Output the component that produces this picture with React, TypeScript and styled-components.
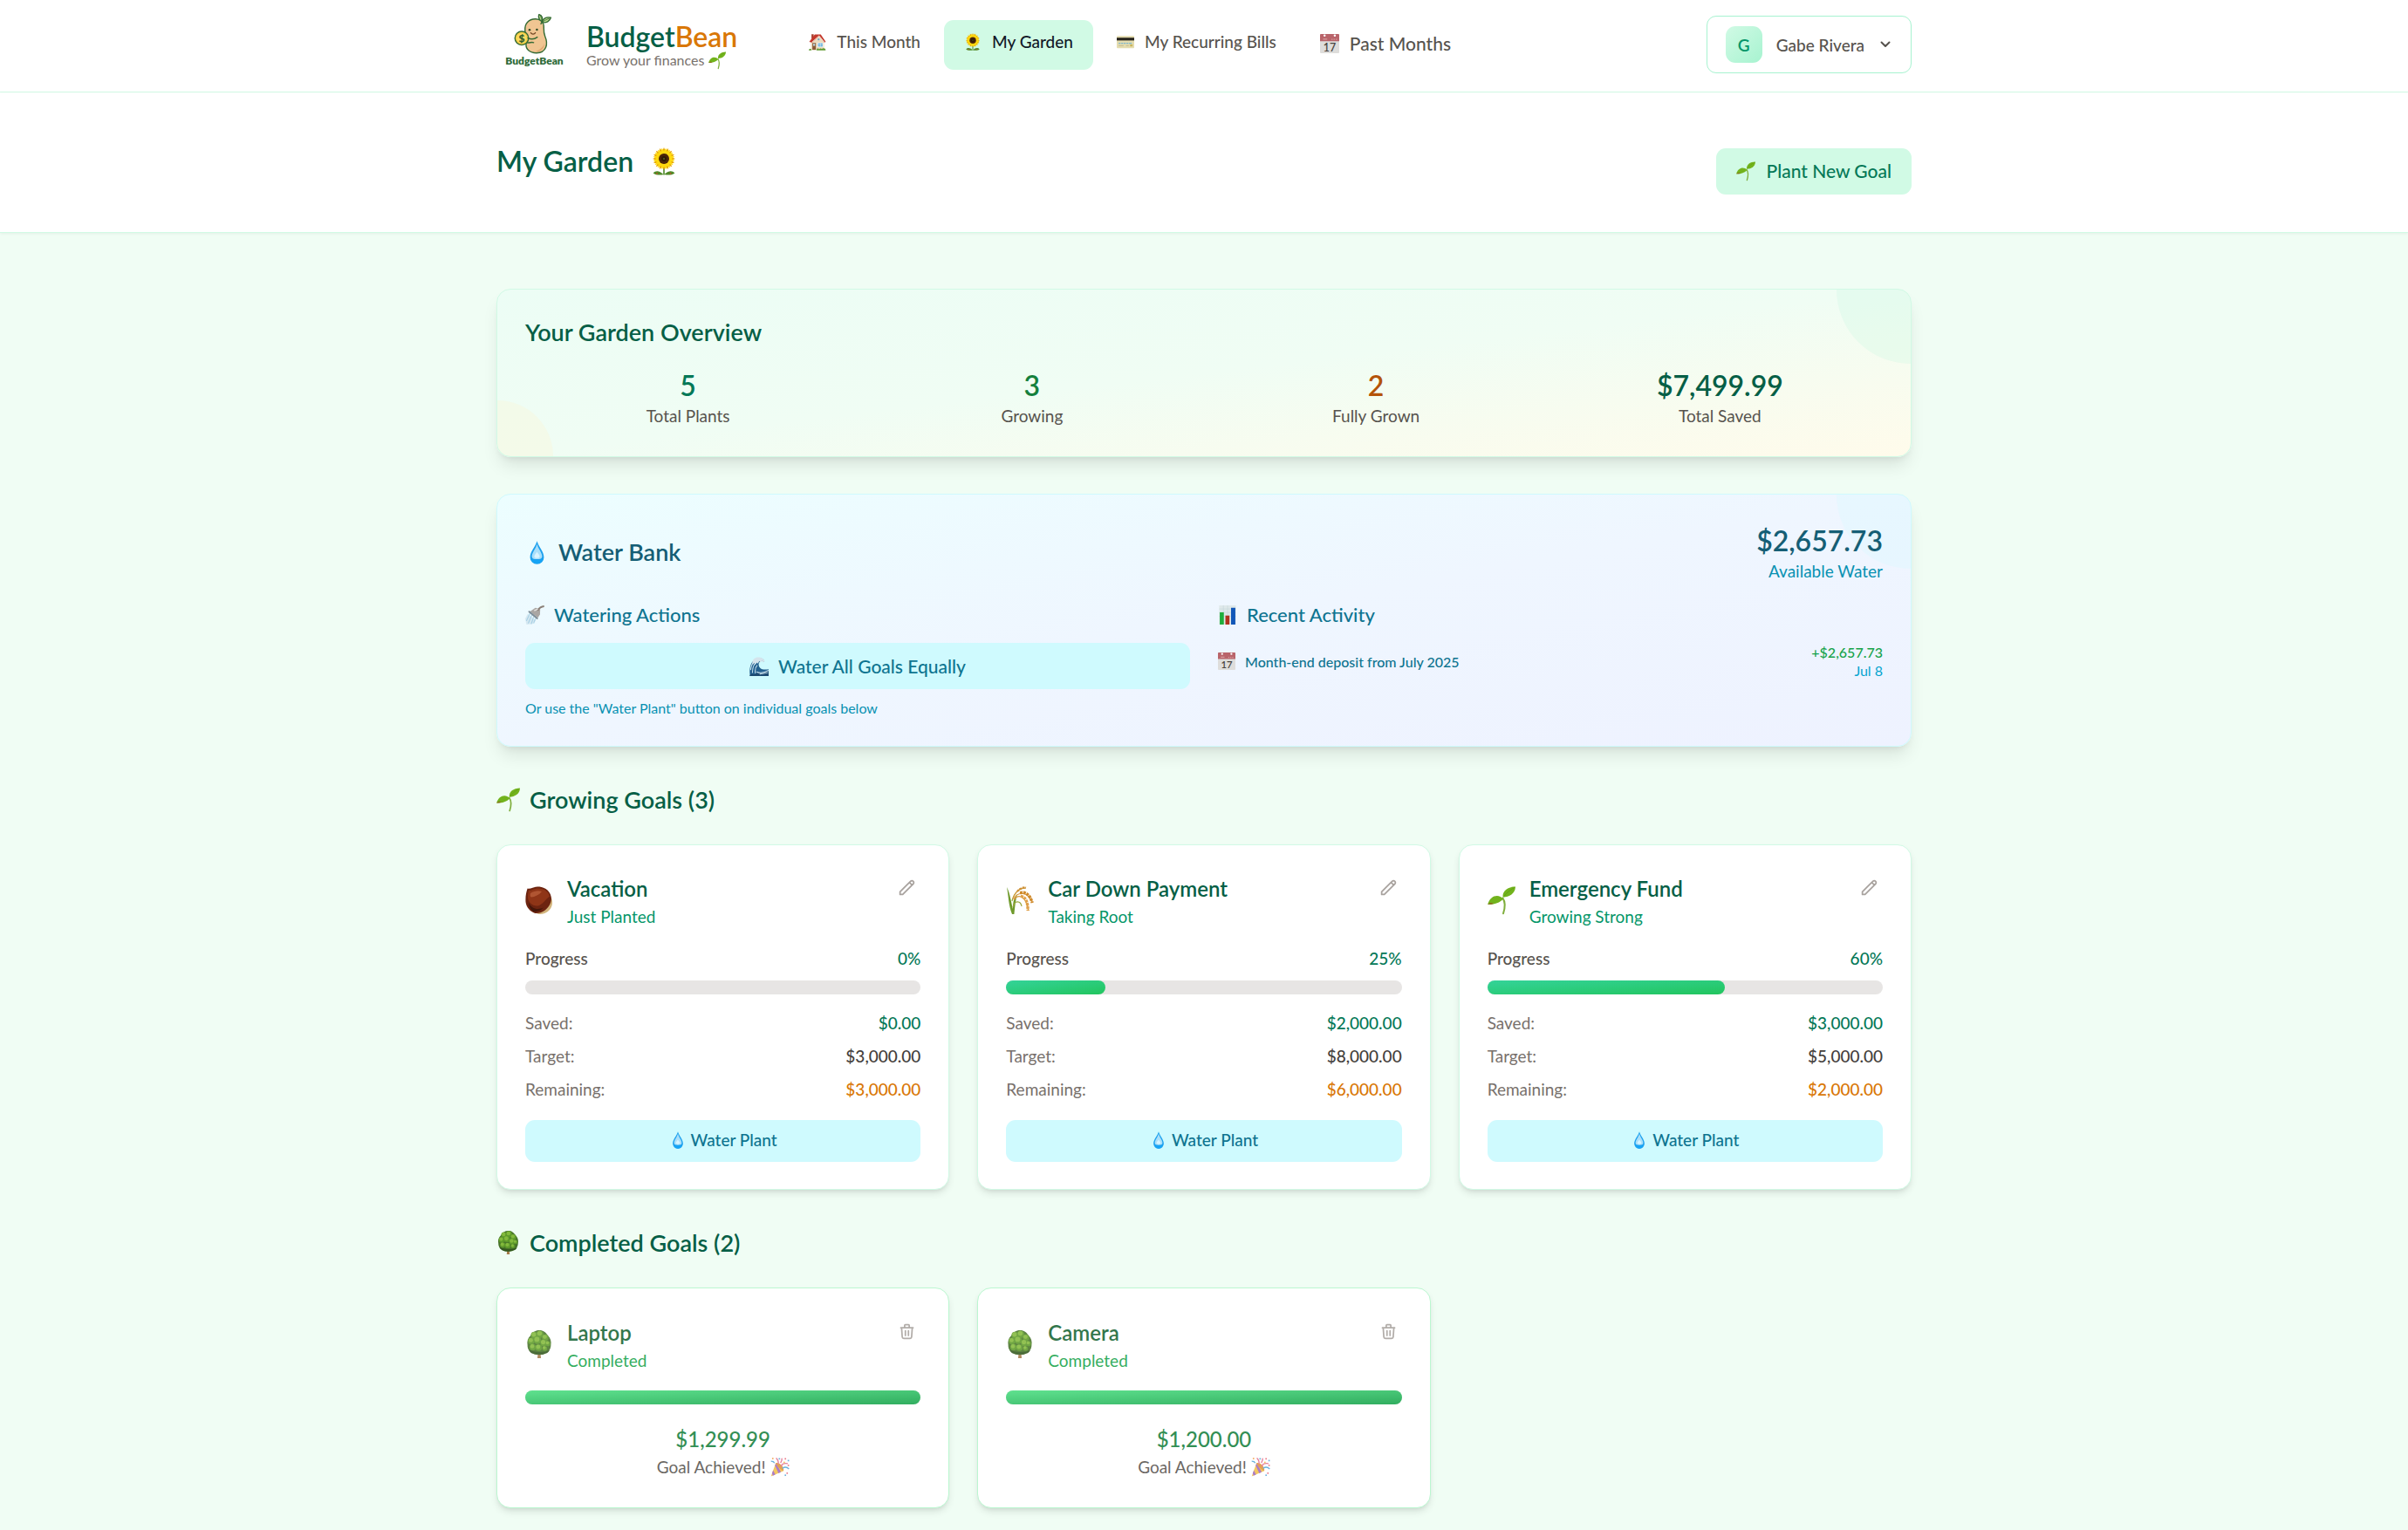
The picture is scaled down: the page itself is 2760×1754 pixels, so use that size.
import React from "react";
import styled, { createGlobalStyle, css } from "styled-components";

const GlobalStyle = createGlobalStyle`
  *, *::before, *::after { box-sizing: border-box; }
  body {
    margin: 0;
    background: #f0fdf4;
    color: #57534e;
    font-family: Lato, "Open Sans", sans-serif;
    font-size: 19px;
    line-height: 27px;
  }
  h1, h2, h3, h4, p, dl, dd, ul { margin: 0; padding: 0; }
  button { border: 0; font: inherit; cursor: pointer; }
`;

/* ---------- drawings ---------- */

const Icon = styled.svg<{ $size: number }>`
  display: block;
  flex: none;
  width: ${(p) => p.$size}px;
  height: ${(p) => p.$size}px;
  overflow: visible;
`;

const ring = (n: number, offset = 0) =>
  Array.from({ length: n }, (_, i) => offset + (i * 360) / n);

const art = {
  seedling: (
    <>
      <path d="M17.4 13.6C20.6 18 20 25 18 31.3" fill="none" stroke="#7fae3c" strokeWidth="2" strokeLinecap="round" />
      <path d="M17.6 12.8C16.6 5.6 23 .6 32 .6 31.6 9 25 12 17.6 12.8z" fill="#72b31c" />
      <path d="M18 14.4C13 8.4 3 10 .2 20.8 7.6 21 14.2 19 18 14.4z" fill="#72b31c" />
      <path d="M.2 20.8C2.6 18.4 5 18.6 7 19.9 4.6 20.7 2.4 21 .2 20.8z" fill="#8a6a1c" />
      <path d="M19 11.4C22 7 26 4.4 31 1.4" fill="none" stroke="#5c9a12" strokeWidth=".7" />
    </>
  ),
  sunflower: (
    <>
      <path d="M16 24v7.6" stroke="#4e8a2a" strokeWidth="1.6" />
      <path d="M15.6 31C11 26.4 6.6 26 3.6 29.4 7 32 12 32 15.6 31zM16.4 31C21 26.4 25.4 26 28.4 29.4 25 32 20 32 16.4 31z" fill="#4f8a27" />
      <circle cx="8" cy="29.8" r=".9" fill="#c8502a" />
      <circle cx="23.6" cy="29.8" r=".9" fill="#c8502a" />
      <circle cx="16" cy="13" r="9.4" fill="#f2bd08" />
      {ring(16).map((a) => (
        <path key={a} d="M16 0L18.6 6 16 12 13.4 6z" fill="#e8a806" transform={`rotate(${a} 16 13)`} />
      ))}
      {ring(16, 11).map((a) => (
        <path key={a} d="M16 .4L18.6 6.2 16 12 13.4 6.2z" fill="#ffd90f" transform={`rotate(${a} 16 13)`} />
      ))}
      <circle cx="16" cy="13" r="6" fill="#4a2508" />
      <circle cx="16" cy="13" r="3" fill="#2f1a06" />
      <circle cx="16" cy="13" r="1" fill="#5c6a1a" />
    </>
  ),
  house: (
    <>
      <rect x="5" y="2" width="4" height="8" fill="#a8402f" />
      <path d="M4 15L16.6 5 28 15v15.6H4z" fill="#ecdcc0" />
      <path d="M.8 15.8L11 2.4h11L31.2 15.8 28.6 17 18.8 5.6 6 17z" fill="#c4382c" />
      <path d="M6 16.6L18.8 4.8 28.4 16.6" fill="none" stroke="#f4eadb" strokeWidth="1.5" />
      <circle cx="18" cy="11.4" r="1.8" fill="#6aa9c9" />
      <rect x="6.6" y="18" width="6.4" height="12.6" fill="#8b5a36" />
      <rect x="8" y="19.4" width="3.6" height="4" fill="#b7cfd6" />
      <rect x="16" y="17.6" width="10.4" height="8" fill="#fff" />
      <rect x="17" y="18.6" width="8.4" height="6" fill="#58a8d8" />
      <path d="M21.2 18.6v6M17 21.6h8.4" stroke="#fff" strokeWidth=".8" />
      <path d="M0 31.4c0-3.6 4.6-3.6 5-.6v.6zM14 31.4c.4-4 4-4 5-2 1.4-2 4-2 5-.2 2-2.8 7-1.6 7 2.2z" fill="#5f9a32" />
    </>
  ),
  card: (
    <>
      <rect x="0" y="5" width="32" height="22.4" rx="1.6" fill="#e4dcae" />
      <rect x="0" y="8.4" width="32" height="5" fill="#26231c" />
      <path d="M3.4 18.4h3.6m1.2 0h3.6m1.2 0h3.6m1.2 0h3.6m1.2 0h5" stroke="#7db6cf" strokeWidth="2" />
      <path d="M3.4 23h9M17 23h5" stroke="#b9b08a" strokeWidth="1.2" />
      <rect x="24.4" y="20.8" width="4.6" height="3.6" fill="#c8b45c" />
    </>
  ),
  calendar: (
    <>
      <rect x="0" y="0" width="32" height="32" rx="1.6" fill="#dedddb" />
      <path d="M1.6 0h28.8A1.6 1.6 0 0132 1.6V12H0V1.6A1.6 1.6 0 011.6 0z" fill="#b9646a" />
      <circle cx="7.6" cy="2.6" r="1.8" fill="#fff" />
      <circle cx="24.6" cy="2.6" r="1.8" fill="#fff" />
      <path d="M5 8.6h7M19 9h2m1.6 0h2m1.6 0h2" stroke="#d59a9c" strokeWidth="1.8" />
      <text x="16" y="28.6" textAnchor="middle" fontSize="18" fontWeight="600" fill="#4a4642">17</text>
    </>
  ),
  drop: (
    <>
      <path d="M16 .4C18 8 25.4 14.6 25.4 22.4a9.4 9.4 0 01-18.8 0C6.6 14.6 14 8 16 .4z" fill="#1da0ee" />
      <path d="M16 4C17.6 11 23 16 23 21c0 3-2.6 4-7 4s-7-1-7-4c0-5 5.4-10 7-17z" fill="#a9dffa" />
      <path d="M16 15c2 3 4 4 3.6 6.6-.6 2.4-6.6 2.4-7.2 0C12 19 14 18 16 15z" fill="#d8f3ff" />
      <path d="M8 24.6c2 2 14 2 16 0-1 4.4-4.4 6.2-8 6.2s-7-1.8-8-6.2z" fill="#16a4f5" />
    </>
  ),
  shower: (
    <>
      <path d="M4 14L18 25 12 31 2 32 0 22z" fill="#cfe3ee" opacity=".8" />
      <path d="M8 13L2 26M11 16L5 30M14 19L10 31M17 22L14 30" stroke="#9ccbe3" strokeWidth="1.7" opacity=".8" />
      <path d="M8 10L21 20.6 24.6 15.4 25 6 17 4z" fill="#aaa6a3" />
      <path d="M6.6 10.4L20 21.8" stroke="#7d8c96" strokeWidth="2.8" strokeLinecap="round" />
      <path d="M20.6 8.6C23 4.6 25 1.8 31.6 1.4" fill="none" stroke="#8b8078" strokeWidth="3" />
      <path d="M15 9L21 6" stroke="#e4e2e0" strokeWidth="2" />
    </>
  ),
  wave: (
    <>
      <path d="M1 31C-1 20 2 8 10 4c7-3.6 14-1 15 4-5-2.6-9-1-9.6 4C15 18 20 23 32 20.6V31z" fill="#23608f" />
      <path d="M2 22C3 13 6 8 11 6M5 27C5 18 7 12 12 9M10 28C9 22 10 17 13 14" fill="none" stroke="#c4dfec" strokeWidth="1.6" />
      <path d="M5 9C5 4 10 .4 15 .8c4 .2 9 2 10.4 6.2l-3 2.4-1.4-3-2.6 3-2-2.6-2.2 4.6-2.4-2-2 4-1.6-3.4-3.2 3z" fill="#d5e4ec" />
      <path d="M0 32C2 27 5 28 8 29.4c4-3 7-3 10-.6 4-3 9-3 14-5V32z" fill="#1c4a72" />
      <path d="M12 25c5 2.6 12 2 20-2.4M17 29c4-1 9-1 14-3" stroke="#c9e0ec" strokeWidth="1.5" fill="none" />
    </>
  ),
  chart: (
    <>
      <rect x="2" y="0" width="28" height="32" fill="#dfe9ea" />
      <path d="M2 6h28M2 12h28M2 18h28M9 0v32M16 0v32" stroke="#c4d6da" strokeWidth=".8" />
      <rect x="3" y="11.6" width="6.8" height="20.4" fill="#1fae3c" />
      <rect x="12.4" y="17" width="6.8" height="15" fill="#b0321f" />
      <rect x="21.8" y="4" width="7.2" height="28" fill="#1257b8" />
    </>
  ),
  chestnut: (
    <>
      <path d="M10 28C4 22 8 8 20 5c8 2 11.6 9 11 15-1 8-8 12-14 12-3 0-5.4-1.6-7-4z" fill="#d2b47c" />
      <path d="M2.6 2.6C6 3.6 9 .6 14 .4 24 .2 30 7 30 14.6 29.6 20 26.6 25 22 28c-4 2.6-9 3.6-12 2.4C4 27.6 .2 22 .4 15.4 .4 10 1.4 6 2.6 2.6z" fill="#6d2410" />
      <path d="M4 4.6C8 5 10 2.4 15 2.4c7 0 12 4 13 9-5 3.6-8 10-14 11C8 22.6 3 18 3 12.4c0-3 .4-5.4 1-7.8z" fill="#8f3517" />
      <path d="M6 8c4-2.6 9-3.6 13-2-3 4-8 6-12 6.6C5.4 12 5.4 10 6 8z" fill="#b65a37" opacity=".85" />
      <path d="M4 19c3 6 9 9 17 5.6-3 3.6-8 5-11.6 4.4C6.4 27 4 23 4 19z" fill="#45170a" />
    </>
  ),
  rice: (
    <>
      <path d="M7 32C3 22 3 12 1 1c4 8 5 18 7 25 0-8 1-13 5-17-2 7-2.6 14-3.6 23z" fill="#6f9a2c" />
      <path d="M8 24C10 15 17 17 18 23M7 17C9 8 14 3 22 2" fill="none" stroke="#9aa63c" strokeWidth="1.2" />
      <path d="M8 14C12 4 17 2 23 2M9 15C13 6 24 5 30 18M9 16C14 8 23 11 25.6 27" fill="none" stroke="#d79a3f" strokeWidth="1.2" />
      <path d="M13 6c3-4 7-5 10-4.4" stroke="#cf8f36" strokeWidth="2.2" strokeDasharray="2.6 1" fill="none" />
      <path d="M16 7.6C23 6 27.6 10 30.2 19" stroke="#d08a2c" strokeWidth="3.4" strokeDasharray="3 .8" fill="none" />
      <path d="M17 11.4C22.6 12 25 18 25.2 28" stroke="#e0a04a" strokeWidth="3.4" strokeDasharray="3 .8" fill="none" />
    </>
  ),
  tree: (
    <>
      <path d="M14.6 25h2.8l.6 7h-4z" fill="#a57b49" />
      <path d="M16 0c5 0 7.6 2.4 9.8 6C29 8.6 30.2 13 29.4 17c0 4.4-2.4 7.6-5.6 9-2 2.2-5.8 2.4-7.8 1.6-2.4.8-6 .4-7.8-1.6C4.8 24.6 2.4 21.4 2.6 17 1.8 13 3 8.6 6.2 6 8.4 2.4 11.4 0 16 0z" fill="#48742a" />
      {[[10.4, 5.8, 4], [17, 4.6, 4.2], [23, 8.6, 3.8], [7, 12.4, 3.8], [14, 11.4, 4.4], [21.2, 14.6, 4], [8.6, 19.4, 3.6], [26, 15.4, 2.8], [15.4, 20, 3.8], [22.4, 21, 2.8]].map(
        ([x, y, r], i) => (
          <g key={i}>
            <circle cx={x} cy={y} r={r} fill="#5e9a2b" />
            <circle cx={x - 0.6} cy={y - 1} r={r * 0.65} fill="#83b93c" />
          </g>
        )
      )}
      <path d="M4 22c5 3.6 19 4 24 .4-1.4 3.2-3.2 3.8-5.4 4.4-4 1.6-9.2 1.6-13.2.2C7 26.4 5 25 4 22z" fill="#34581f" />
    </>
  ),
  party: (
    <>
      <path d="M9 9L1 31.4 22 22C21 15 15 9 9 9z" fill="#f3c04a" />
      <path d="M7.6 13L13.6 26 17.6 24 9.6 9.4zM4.6 21l3.6 7.4L4 30.2 2.8 26z" fill="#a06cc0" />
      <path d="M9 9c6-1.4 14 6 13 13-4-1-12-8-13-13z" fill="#e0953a" />
      <path d="M13 11C14 6 12 3 9.6.8M18 15c1-5 5-6 11-5M17 9c2-3 3-5 2-8" fill="none" stroke="#e2708f" strokeWidth="2" />
      <path d="M20 18c4-3 8-2 11 1M1 6c3 0 5 1 6 3" fill="none" stroke="#59a8d8" strokeWidth="2" />
      {[["#e86a7a", 25, 2], ["#59a8d8", 30, 5], ["#f3c04a", 23, 8], ["#e86a7a", 28, 26], ["#59a8d8", 25, 29.4], ["#f3a04a", 4, 1.6], ["#e86a7a", 30, 13], ["#59a8d8", 15, 2]].map(([c, x, y], i) => (
        <rect key={i} x={Number(x) - 1.2} y={Number(y) - 1.2} width="2.4" height="2.4" fill={String(c)} />
      ))}
    </>
  ),
};

type ArtName = keyof typeof art;

const Emoji = ({ name, size }: { name: ArtName; size: number }) => (
  <Icon $size={size} viewBox="0 0 32 32" aria-hidden="true">
    {art[name]}
  </Icon>
);

const LogoSvg = styled.svg`
  display: block;
  flex: none;
  width: 87px;
  height: 72px;
`;

const Logo = () => (
  <LogoSvg viewBox="0 0 87 72" role="img" aria-label="BudgetBean logo">
    <g stroke="#356b35" strokeWidth="1.4" strokeLinejoin="round" strokeLinecap="round">
      <path d="M52 9.4C48.6 6.6 48 3 48.8.6 52.4 1.6 53.6 5 52 9.4z" fill="#bcd98c" />
      <path d="M52.4 9.6C53.4 5 57.6 3 62.4 4.2 61.4 8.4 57 10.6 52.4 9.6z" fill="#bcd98c" />
      <path d="M50.4 1.8C51.4 4 51.8 6.6 52.2 9.4 55 7.6 57.6 6 60.6 5" fill="none" strokeWidth=".8" />
      <path
        d="M44.5 5.7C50 5.5 54.5 9.5 54.3 15 54.2 20 54 22 55.8 26 59.4 34 57.6 44.5 46 44.7 38 44.8 33.5 40 34 35 34.5 28 33.2 26 32.8 19 32 11 37 6 44.5 5.7z"
        fill="#f0c592"
      />
      <path d="M52 9.4L51 11.4" fill="none" />
    </g>
    <path d="M55 34C55 40 50 43.6 44 43.4 50 41 53.6 38 55 34z" fill="#e0a870" />
    <circle cx="38" cy="18.2" r="1.3" fill="#2f4a26" />
    <circle cx="46.4" cy="18" r="1.3" fill="#2f4a26" />
    <path d="M39.4 21.6c1.2 2 4 2 5.2 0" fill="none" stroke="#6b3f1e" strokeWidth="1.2" strokeLinecap="round" />
    <circle cx="29" cy="27.8" r="7.8" fill="#f7cf46" stroke="#356b35" strokeWidth="1.4" />
    <circle cx="29" cy="27.8" r="5.6" fill="#fbdc62" />
    <text x="29" y="32" textAnchor="middle" fontSize="12" fontWeight="800" fill="#35602f">$</text>
    <path d="M36 27.6c4 1.8 7.6 1.4 10.8-1M35.6 33c3 .2 4.6-1 7-.2" fill="none" stroke="#356b35" strokeWidth="1.4" strokeLinecap="round" />
    <text x="43.5" y="58" textAnchor="middle" fontSize="12" fontWeight="800" fill="#2f6b3a">BudgetBean</text>
  </LogoSvg>
);

const StrokeIcon = styled.svg<{ $size: number }>`
  display: block;
  flex: none;
  width: ${(p) => p.$size}px;
  height: ${(p) => p.$size}px;
  fill: none;
  stroke: currentColor;
  stroke-linecap: round;
  stroke-linejoin: round;
  stroke-width: 2;
`;

/* ---------- page frame ---------- */

const Container = styled.div`
  width: 100%;
  max-width: 1686px;
  margin: 0 auto;
  padding: 0 32px;
`;

const TopBar = styled.header`
  background: #fff;
  border-bottom: 1px solid #d1fae5;
`;

const TopBarRow = styled(Container)`
  display: flex;
  align-items: flex-start;
  min-height: 105px;
  flex-wrap: wrap;
`;

const Brand = styled.a`
  display: flex;
  align-items: center;
  gap: 16px;
  padding-top: 16px;
  color: inherit;
  text-decoration: none;
`;

const BrandName = styled.span`
  display: block;
  color: #065f46;
  font-size: 32px;
  font-weight: 600;
  line-height: 33px;
`;

const BrandAccent = styled.span`
  color: #d97706;
`;

const Tagline = styled.span`
  display: flex;
  align-items: center;
  gap: 5px;
  color: #78716c;
  font-size: 16px;
  line-height: 21px;
`;

const Nav = styled.nav`
  display: flex;
  flex-wrap: wrap;
  align-items: flex-start;
  gap: 4px;
  margin-left: 59px;
  padding-top: 23px;
`;

const NavLink = styled.a<{ $active?: boolean; $large?: boolean }>`
  display: flex;
  align-items: center;
  gap: 12px;
  padding: 11px 23px 19px;
  border-radius: 11px;
  background: ${(p) => (p.$active ? "#d1fae5" : "transparent")};
  color: ${(p) => (p.$active ? "#111827" : "#57534e")};
  font-size: ${(p) => (p.$large ? 21 : 19)}px;
  line-height: ${(p) => (p.$large ? 32 : 27)}px;
  font-weight: 500;
  text-decoration: none;
`;

const UserArea = styled.div`
  margin-left: auto;
  padding-top: 18px;
`;

const UserButton = styled.button`
  display: flex;
  align-items: center;
  gap: 16px;
  padding: 11px 21px;
  border: 1px solid #a7f3d0;
  border-radius: 11px;
  background: #fff;
  color: #57534e;
  font-weight: 500;
`;

const Avatar = styled.span`
  display: grid;
  place-items: center;
  width: 42px;
  height: 42px;
  border-radius: 11px;
  background: linear-gradient(to bottom right, #d1fae5, #a7f3d0);
  color: #059669;
  font-weight: 600;
`;

const PageHeader = styled.div`
  position: relative;
  padding: 57px 0 43px;
  background: #fff;
  border-bottom: 1px solid #d1fae5;
  box-shadow: 0 1px 3px rgba(0, 0, 0, 0.06);
`;

const PageHeaderRow = styled(Container)`
  display: flex;
  align-items: flex-start;
  justify-content: space-between;
  min-height: 60px;
`;

const PageTitle = styled.h1`
  display: flex;
  align-items: center;
  gap: 19px;
  color: #065f46;
  font-size: 32px;
  font-weight: 600;
  line-height: 43px;
`;

const softButton = css`
  display: flex;
  align-items: center;
  justify-content: center;
  border-radius: 11px;
  font-weight: 500;
`;

const PlantButton = styled.button`
  ${softButton}
  align-self: flex-end;
  gap: 12px;
  padding: 10px 23px 11px;
  background: #d1fae5;
  color: #047857;
  font-size: 21px;
  line-height: 32px;
`;

const Main = styled(Container)`
  display: flex;
  flex-direction: column;
  gap: 42px;
  padding-top: 64px;
  padding-bottom: 24px;
`;

/* ---------- feature panels ---------- */

const Panel = styled.section<{ $tone: "garden" | "water" }>`
  position: relative;
  overflow: hidden;
  padding: 31px 32px 33px;
  border: 1px solid ${(p) => (p.$tone === "garden" ? "#d1fae5" : "#cffafe")};
  border-radius: 16px;
  background: ${(p) =>
    p.$tone === "garden"
      ? "linear-gradient(to bottom right, #ecfdf5, #f0fdf4, #fffbeb)"
      : "linear-gradient(to bottom right, #ecfeff, #eff6ff, #eef2ff)"};
  box-shadow: 0 13px 20px -4px rgba(0, 0, 0, 0.1), 0 5px 8px -5px rgba(0, 0, 0, 0.1);
`;

const Bubble = styled.span<{ $corner: "top" | "bottom"; $color: string }>`
  position: absolute;
  border-radius: 50%;
  opacity: 0.25;
  background: ${(p) => p.$color};
  ${(p) =>
    p.$corner === "top"
      ? "width: 170px; height: 170px; top: -85px; right: -85px;"
      : "width: 128px; height: 128px; bottom: -64px; left: -64px;"}
`;

const PanelBody = styled.div`
  position: relative;
`;

const PanelTitle = styled.h2<{ $color: string }>`
  display: flex;
  align-items: center;
  gap: 11px;
  color: ${(p) => p.$color};
  font-size: 27px;
  font-weight: 600;
  line-height: 36px;
`;

const Stats = styled.dl`
  display: grid;
  grid-template-columns: repeat(auto-fit, minmax(200px, 1fr));
  gap: 21px;
  padding-top: 21px;
  text-align: center;
`;

const Stat = styled.div`
  display: flex;
  flex-direction: column-reverse;
`;

const StatLabel = styled.dt`
  color: #57534e;
`;

const BigNumber = styled.dd<{ $color: string }>`
  color: ${(p) => p.$color};
  font-size: 32px;
  font-weight: 600;
  line-height: 43px;
`;

const WaterHead = styled.div`
  display: flex;
  align-items: center;
  justify-content: space-between;
  margin-bottom: 21px;
`;

const WaterBalance = styled.dl`
  display: flex;
  flex-direction: column-reverse;
  text-align: right;
`;

const WaterLabel = styled.dt`
  color: #0891b2;
`;

const WaterColumns = styled.div`
  display: grid;
  grid-template-columns: repeat(auto-fit, minmax(420px, 1fr));
  gap: 32px;
`;

const SubTitle = styled.h3`
  display: flex;
  align-items: center;
  gap: 11px;
  margin-bottom: 16px;
  color: #0e7490;
  font-size: 22px;
  font-weight: 500;
  line-height: 32px;
`;

const WaterAllButton = styled.button`
  ${softButton}
  gap: 11px;
  width: 100%;
  padding: 11px 21px 10px;
  background: #cffafe;
  color: #0e7490;
  font-size: 21px;
  line-height: 32px;
`;

const Hint = styled.p`
  margin-top: 11px;
  color: #0891b2;
  font-size: 16px;
  line-height: 21px;
`;

const Activity = styled.div`
  display: flex;
  align-items: center;
  gap: 11px;
  color: #0e7490;
  font-size: 16px;
  font-weight: 500;
  line-height: 21px;
`;

const ActivitySum = styled.div`
  margin-left: auto;
  color: #16a34a;
  text-align: right;
`;

const ActivityDate = styled.time`
  display: block;
  color: #06a5d0;
  font-weight: 400;
`;

/* ---------- goals ---------- */

const GoalGroup = styled.section`
  display: grid;
  gap: 33px;
`;

const GroupTitle = styled.h2`
  display: flex;
  align-items: center;
  gap: 11px;
  color: #065f46;
  font-size: 27px;
  font-weight: 600;
  line-height: 37px;
`;

const GoalGrid = styled.div`
  display: grid;
  grid-template-columns: repeat(auto-fill, minmax(420px, 1fr));
  gap: 32px;
`;

const Card = styled.article<{ $done?: boolean }>`
  padding: ${(p) => (p.$done ? "32px 32px 33px" : "31px 32px")};
  border: 1px solid ${(p) => (p.$done ? "#bbf7d0" : "#d1fae5")};
  border-radius: 16px;
  background: #fff;
  box-shadow: 0 5px 8px -1px rgba(0, 0, 0, 0.1), 0 3px 5px -3px rgba(0, 0, 0, 0.1);
`;

const CardBody = styled.div<{ $done?: boolean }>`
  opacity: ${(p) => (p.$done ? 0.88 : 1)};
`;

const CardHead = styled.div`
  display: flex;
  align-items: center;
  gap: 16px;
  margin-bottom: 21px;
`;

const GoalName = styled.h3<{ $done?: boolean }>`
  color: ${(p) => (p.$done ? "#166534" : "#065f46")};
  font-size: 24px;
  font-weight: 600;
  line-height: 37px;
`;

const Stage = styled.p<{ $done?: boolean }>`
  color: ${(p) => (p.$done ? "#16a34a" : "#059669")};
`;

const IconButton = styled.button`
  align-self: flex-start;
  margin-left: auto;
  padding: 7px 5px;
  background: transparent;
  color: #a8a29e;
`;

const ProgressLine = styled.div`
  display: flex;
  justify-content: space-between;
  margin-bottom: 12px;
  font-weight: 500;
`;

const Percent = styled.span`
  color: #047857;
`;

const Track = styled.div`
  height: 16px;
  border-radius: 8px;
  background: #e7e5e4;
`;

const Fill = styled.div<{ $done?: boolean }>`
  height: 100%;
  border-radius: 8px;
  background: ${(p) =>
    p.$done
      ? "linear-gradient(to bottom right, #4ade80, #16a34a)"
      : "linear-gradient(to bottom right, #34d399, #22c55e)"};
`;

const Figures = styled.dl`
  display: grid;
  gap: 11px;
  padding: 19px 0 22px;
`;

const Figure = styled.div`
  display: flex;
  justify-content: space-between;
`;

const FigureLabel = styled.dt`
  color: #78716c;
`;

const FigureValue = styled.dd<{ $color: string }>`
  color: ${(p) => p.$color};
  font-weight: 500;
`;

const WaterButton = styled.button`
  ${softButton}
  gap: 5px;
  width: 100%;
  padding: 9px 16px 12px;
  background: #cffafe;
  color: #0e7490;
`;

const Achieved = styled.div`
  padding-top: 21px;
  text-align: center;
`;

const AchievedSum = styled.p`
  color: #15803d;
  font-size: 24px;
  font-weight: 500;
  line-height: 37px;
`;

const AchievedNote = styled.p`
  display: flex;
  align-items: center;
  justify-content: center;
  gap: 5px;
`;

/* ---------- data ---------- */

const money = (n: number) =>
  n.toLocaleString("en-US", { style: "currency", currency: "USD" });

const links: { label: string; icon: ArtName; active?: boolean; large?: boolean }[] = [
  { label: "This Month", icon: "house" },
  { label: "My Garden", icon: "sunflower", active: true },
  { label: "My Recurring Bills", icon: "card" },
  { label: "Past Months", icon: "calendar", large: true },
];

const growing: { name: string; stage: string; icon: ArtName; saved: number; target: number }[] = [
  { name: "Vacation", stage: "Just Planted", icon: "chestnut", saved: 0, target: 3000 },
  { name: "Car Down Payment", stage: "Taking Root", icon: "rice", saved: 2000, target: 8000 },
  { name: "Emergency Fund", stage: "Growing Strong", icon: "seedling", saved: 3000, target: 5000 },
];

const completed = [
  { name: "Laptop", saved: 1299.99 },
  { name: "Camera", saved: 1200 },
];

const stats = [
  { label: "Total Plants", value: "5", color: "#047857" },
  { label: "Growing", value: "3", color: "#15803d" },
  { label: "Fully Grown", value: "2", color: "#b45309" },
  { label: "Total Saved", value: money(7499.99), color: "#065f46" },
];

const GrowingCard = ({ name, stage, icon, saved, target }: (typeof growing)[number]) => {
  const percent = Math.round((saved / target) * 100);
  return (
    <Card>
      <CardHead>
        <Emoji name={icon} size={32} />
        <div>
          <GoalName>{name}</GoalName>
          <Stage>{stage}</Stage>
        </div>
        <IconButton aria-label={`Edit ${name}`}>
          <StrokeIcon $size={21} viewBox="0 0 24 24">
            <path d="M15.232 5.232l3.536 3.536m-2.036-5.036a2.5 2.5 0 113.536 3.536L6.5 21.036H3v-3.572L16.732 3.732z" />
          </StrokeIcon>
        </IconButton>
      </CardHead>
      <ProgressLine>
        <span>Progress</span>
        <Percent>{percent}%</Percent>
      </ProgressLine>
      <Track role="progressbar" aria-label={`${name} progress`} aria-valuenow={percent}>
        <Fill style={{ width: `${percent}%` }} />
      </Track>
      <Figures>
        <Figure>
          <FigureLabel>Saved:</FigureLabel>
          <FigureValue $color="#047857">{money(saved)}</FigureValue>
        </Figure>
        <Figure>
          <FigureLabel>Target:</FigureLabel>
          <FigureValue $color="#44403c">{money(target)}</FigureValue>
        </Figure>
        <Figure>
          <FigureLabel>Remaining:</FigureLabel>
          <FigureValue $color="#d97706">{money(target - saved)}</FigureValue>
        </Figure>
      </Figures>
      <WaterButton>
        <Emoji name="drop" size={20} />
        Water Plant
      </WaterButton>
    </Card>
  );
};

const CompletedCard = ({ name, saved }: (typeof completed)[number]) => (
  <Card $done>
    <CardBody $done>
      <CardHead>
        <Emoji name="tree" size={32} />
        <div>
          <GoalName $done>{name}</GoalName>
          <Stage $done>Completed</Stage>
        </div>
        <IconButton aria-label={`Delete ${name}`}>
          <StrokeIcon $size={21} viewBox="0 0 24 24">
            <path d="M19 7l-.867 12.142A2 2 0 0116.138 21H7.862a2 2 0 01-1.995-1.858L5 7m5 4v6m4-6v6m1-10V4a1 1 0 00-1-1h-4a1 1 0 00-1 1v3M4 7h16" />
          </StrokeIcon>
        </IconButton>
      </CardHead>
      <Track role="progressbar" aria-label={`${name} progress`} aria-valuenow={100}>
        <Fill $done />
      </Track>
      <Achieved>
        <AchievedSum>{money(saved)}</AchievedSum>
        <AchievedNote>
          Goal Achieved!
          <Emoji name="party" size={22} />
        </AchievedNote>
      </Achieved>
    </CardBody>
  </Card>
);

export default function App() {
  return (
    <>
      <GlobalStyle />
      <TopBar>
        <TopBarRow>
          <Brand href="#">
            <Logo />
            <span>
              <BrandName>
                Budget<BrandAccent>Bean</BrandAccent>
              </BrandName>
              <Tagline>
                Grow your finances
                <Emoji name="seedling" size={20} />
              </Tagline>
            </span>
          </Brand>
          <Nav aria-label="Main">
            {links.map((l) => (
              <NavLink key={l.label} href="#" $active={l.active} $large={l.large}>
                <Emoji name={l.icon} size={l.large ? 22 : 20} />
                {l.label}
              </NavLink>
            ))}
          </Nav>
          <UserArea>
            <UserButton>
              <Avatar>G</Avatar>
              Gabe Rivera
              <StrokeIcon $size={16} viewBox="0 0 16 16">
                <path d="M3.5 5.5L8 10l4.5-4.5" />
              </StrokeIcon>
            </UserButton>
          </UserArea>
        </TopBarRow>
      </TopBar>

      <PageHeader>
        <PageHeaderRow>
          <PageTitle>
            My Garden
            <Emoji name="sunflower" size={32} />
          </PageTitle>
          <PlantButton>
            <Emoji name="seedling" size={22} />
            Plant New Goal
          </PlantButton>
        </PageHeaderRow>
      </PageHeader>

      <Main as="main">
        <Panel $tone="garden">
          <Bubble $corner="top" $color="#c4f7de" />
          <Bubble $corner="bottom" $color="#fef3c7" />
          <PanelBody>
            <PanelTitle $color="#065f46">Your Garden Overview</PanelTitle>
            <Stats>
              {stats.map((s) => (
                <Stat key={s.label}>
                  <StatLabel>{s.label}</StatLabel>
                  <BigNumber $color={s.color}>{s.value}</BigNumber>
                </Stat>
              ))}
            </Stats>
          </PanelBody>
        </Panel>

        <Panel $tone="water">
          <Bubble $corner="top" $color="#cffafe" />
          <PanelBody>
            <WaterHead>
              <PanelTitle $color="#155e75">
                <Emoji name="drop" size={27} />
                Water Bank
              </PanelTitle>
              <WaterBalance>
                <WaterLabel>Available Water</WaterLabel>
                <BigNumber $color="#155e75">{money(2657.73)}</BigNumber>
              </WaterBalance>
            </WaterHead>
            <WaterColumns>
              <div>
                <SubTitle>
                  <Emoji name="shower" size={22} />
                  Watering Actions
                </SubTitle>
                <WaterAllButton>
                  <Emoji name="wave" size={22} />
                  Water All Goals Equally
                </WaterAllButton>
                <Hint>Or use the "Water Plant" button on individual goals below</Hint>
              </div>
              <div>
                <SubTitle>
                  <Emoji name="chart" size={22} />
                  Recent Activity
                </SubTitle>
                <Activity>
                  <Emoji name="calendar" size={20} />
                  Month-end deposit from July 2025
                  <ActivitySum>
                    +{money(2657.73)}
                    <ActivityDate>Jul 8</ActivityDate>
                  </ActivitySum>
                </Activity>
              </div>
            </WaterColumns>
          </PanelBody>
        </Panel>

        <GoalGroup>
          <GroupTitle>
            <Emoji name="seedling" size={27} />
            Growing Goals ({growing.length})
          </GroupTitle>
          <GoalGrid>
            {growing.map((g) => (
              <GrowingCard key={g.name} {...g} />
            ))}
          </GoalGrid>
        </GoalGroup>

        <GoalGroup>
          <GroupTitle>
            <Emoji name="tree" size={27} />
            Completed Goals ({completed.length})
          </GroupTitle>
          <GoalGrid>
            {completed.map((g) => (
              <CompletedCard key={g.name} {...g} />
            ))}
          </GoalGrid>
        </GoalGroup>
      </Main>
    </>
  );
}
